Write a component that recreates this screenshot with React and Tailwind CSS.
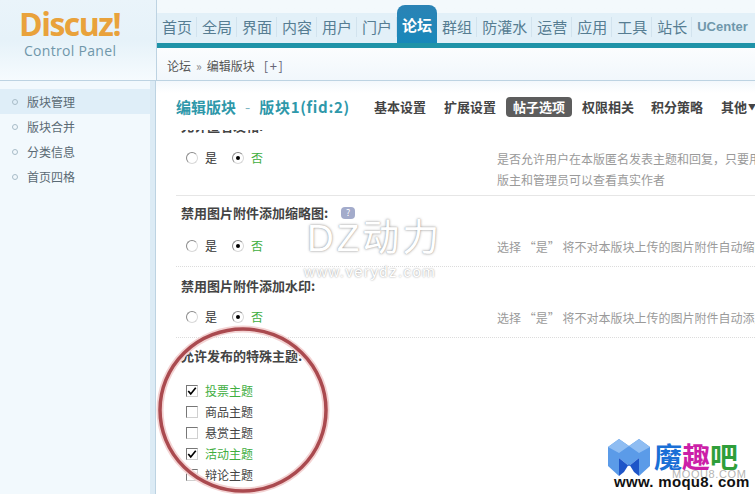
const navItems = [
  ["首页"], ["全局"], ["界面"], ["内容"], ["用户"], ["门户"], ["论坛", true], ["群组"], ["防灌水"], ["运营"], ["应用"], ["工具"], ["站长"],
];
const side = ["版块管理", "版块合并", "分类信息", "首页四格"];
const tabs = [
  ["基本设置", "ml-[28px]"], ["扩展设置", "ml-[18px]"], ["帖子选项", "ml-[10px]", true], ["权限相关", "ml-[10px]"], ["积分策略", "ml-[17px]"],
];

function Radio({ on }) {
  return (
    <span className="flex h-[12px] w-[12px] shrink-0 items-center justify-center rounded-full border border-[#8a8a8a] border-r-[#d8d8d8] border-b-[#d8d8d8] bg-white">
      {on && <span className="h-[4px] w-[4px] rounded-full bg-black" />}
    </span>
  );
}

function YesNo({ hint, hint2, h = "h-[36px]" }) {
  return (
    <div className={`flex ${h} items-start`}>
      <div className="flex w-[321px] shrink-0 items-center pl-[10px] text-[12px] leading-[18px]">
        <Radio />
        <span className="ml-[7px] w-[27px] text-[#333]">是</span>
        <Radio on />
        <span className="ml-[7px] text-[#3fae3f]">否</span>
      </div>
      <div className="whitespace-nowrap text-[12px] leading-[21px] text-[#9a9a9a]">
        <div className="-mt-[1px]">{hint}</div>
        {hint2 && <div>{hint2}</div>}
      </div>
    </div>
  );
}

function Check({ label, on }) {
  return (
    <div className="flex h-[21px] items-center pl-[10px] text-[12px]">
      <span className="flex h-[12px] w-[12px] shrink-0 items-center justify-center border border-[#777] border-r-[#d0d0d0] border-b-[#d0d0d0] bg-white">
        {on && (
          <svg viewBox="0 0 12 12" className="h-[10px] w-[10px]">
            <path d="M1.5 6 L4.5 9.5 L10.5 2" fill="none" stroke="#000" strokeWidth="2" />
          </svg>
        )}
      </span>
      <span className={`ml-[7px] ${on ? "text-[#3fae3f]" : "text-[#444]"}`}>{label}</span>
    </div>
  );
}

export default function App() {
  return (
    <div
      className="relative flex h-[494px] w-[755px] flex-col overflow-hidden bg-white"
      style={{ fontFamily: '"Noto Sans CJK SC", "Liberation Sans", sans-serif' }}
    >
      {/* header */}
      <div className="flex h-[81px] shrink-0 border-b border-[#bdd3e2]">
        <div className="flex w-[156px] shrink-0 flex-col items-start bg-gradient-to-b from-[#eaf4fa] via-[#e6f2f9] to-[#f6fbfe] pl-[19px] pt-[6px]">
          <div
            className="text-[32px] font-bold leading-[36px] tracking-[-1.5px] text-[#e9a23b]"
            style={{ fontFamily: '"Open Sans", sans-serif' }}
          >
            Discuz!
          </div>
          <div
            className="ml-[5px] text-[14px] leading-[18px] tracking-[0.3px] text-[#7097aa]"
            style={{ fontFamily: '"Open Sans", sans-serif' }}
          >
            Control Panel
          </div>
        </div>
        <div className="flex min-w-0 flex-1 flex-col border-l border-[#bdd3e2]">
          <div className="flex h-[43px] shrink-0 items-end bg-gradient-to-b from-[#f3f9fc] from-30% to-[#e2f0f8] to-30%">
            {navItems.map(([t, on]) =>
              on ? (
                <div
                  key={t}
                  className="flex h-[38px] items-center rounded-t-[8px] bg-gradient-to-b from-[#2a83b5] to-[#1888ba] px-[5px] pt-[3px] text-[15px] font-bold text-white"
                >
                  {t}
                </div>
              ) : (
                <div key={t} className="relative flex h-[38px] items-center px-[5px] pt-[5px] text-[15px] leading-[20px] text-[#567d92]">
                  {t}
                  <span className="absolute right-0 top-[12px] h-[20px] w-px bg-[#d2e3ee]" />
                </div>
              )
            )}
            <div
              className="ml-[5px] flex h-[38px] items-center whitespace-nowrap pt-[5px] text-[13px] font-bold text-[#6f97ab]"
              style={{ fontFamily: '"Liberation Sans", sans-serif' }}
            >
              UCenter
            </div>
          </div>
          <div className="h-[5px] shrink-0 bg-[#1f93a8]" />
          <div className="flex flex-1 items-center bg-gradient-to-b from-[#fbfdfe] to-[#f1f7fc] pl-[10px] pt-[4px] text-[12px] text-[#555]">
            论坛 <span className="mx-[5px] text-[#888]">»</span> 编辑版块
            <span className="ml-[9px] text-[13px] tracking-[1.5px] text-[#667]">[+]</span>
          </div>
        </div>
      </div>

      {/* body */}
      <div className="flex min-h-0 flex-1">
        <div className="flex w-[156px] shrink-0 border-r border-[#bdd3e2]">
          <div className="w-[150px] bg-[#f2f9fd] pt-[8px]">
            {side.map((s, i) => (
              <div
                key={s}
                className={`flex h-[25px] items-center pl-[12px] text-[12px] text-[#5a6a74] ${i === 0 ? "bg-[#dfeef8]" : ""}`}
              >
                <span className="h-[6px] w-[6px] rounded-full border border-[#a8bcc8]" />
                <span className="ml-[9px]">{s}</span>
              </div>
            ))}
          </div>
          <div className="flex-1 bg-[#dcebf5]" />
        </div>

        <div className="min-w-0 flex-1 overflow-hidden bg-gradient-to-b from-[#f3f8fc] to-white to-[12px]">
          <div className="flex h-[47px] items-center whitespace-nowrap pl-[20px] pt-[5px]">
            <div className="flex w-[170px] shrink-0 items-center text-[15px] font-bold text-[#2e98aa]">
              编辑版块<span className="mx-[9px] font-normal text-[#7fb5c2]">-</span>
              <span className="tracking-[0.7px]">版块1(fid:2)</span>
            </div>
            {tabs.map(([t, ml, on]) => (
              <div
                key={t}
                className={`${ml} text-[13px] font-bold ${on ? "rounded-[4px] bg-[#5d5d5d] px-[7px] py-[1px] leading-[18px] text-white" : "text-[#444]"}`}
              >
                {t}
              </div>
            ))}
            <div className="ml-[18px] flex items-center text-[13px] font-bold text-[#444]">
              其他<span className="ml-[1px] text-[8px]">▼</span>
            </div>
          </div>

          <div className="pl-[20px]">
            <div className="h-[2px]" />
            <div className="h-[3px] overflow-hidden pl-[5px]">
              <div className="-mt-[13px] text-[13px] font-bold leading-[18px] text-[#444]">允许匿名发帖:</div>
            </div>
            <div className="h-[16px]" />
            <div className="border-b border-[#e6e6e6]">
              <YesNo
                hint="是否允许用户在本版匿名发表主题和回复，只要用户组权限允许，用户就可以匿名"
                hint2="版主和管理员可以查看真实作者"
                h="h-[46px]"
              />
            </div>

            <div className="flex h-[39px] items-center pb-[5px] pl-[5px] text-[13px] font-bold text-[#444]">
              禁用图片附件添加缩略图:
              <span className="ml-[13px] flex h-[12px] w-[14px] items-center justify-center rounded-[4px] bg-[#a3abcb] text-[9px] font-normal text-white">
                ?
              </span>
            </div>
            <div className="border-b border-dotted border-[#dcdcdc] pt-[2px]">
              <YesNo hint="选择 “是” 将不对本版块上传的图片附件自动缩略图片附件自动缩略" h="h-[29px]" />
            </div>

            <div className="flex h-[37px] items-center pl-[5px] text-[13px] font-bold text-[#444]">禁用图片附件添加水印:</div>
            <div className="border-b border-dotted border-[#dcdcdc] pt-[4px]">
              <YesNo hint="选择 “是” 将不对本版块上传的图片附件自动添加水印图片附件" h="h-[29px]" />
            </div>

            <div className="flex h-[38px] items-center pb-[2px] pl-[5px] text-[13px] font-bold text-[#444]">允许发布的特殊主题:</div>
            <div className="pt-[4px]">
              <Check label="投票主题" on />
              <Check label="商品主题" />
              <Check label="悬赏主题" />
              <Check label="活动主题" on />
              <Check label="辩论主题" />
            </div>
          </div>
        </div>
      </div>

      {/* watermark */}
      <div
        className="pointer-events-none absolute left-[307px] top-[217px] text-[37px] leading-[44px] tracking-[3px] text-white"
        style={{ fontFamily: '"Liberation Sans", "Noto Sans CJK SC", sans-serif', textShadow: "0 0 3px #9a9a9a, 0 0 1px #b0b0b0" }}
      >
        DZ动力
      </div>
      <div
        className="pointer-events-none absolute left-[304px] top-[263px] text-[15px] leading-[18px] tracking-[1.4px] text-white"
        style={{ fontFamily: '"Liberation Sans", sans-serif', textShadow: "0 0 2px #8a8a8a" }}
      >
        www.verydz.com
      </div>

      {/* red circle annotation */}
      <svg className="pointer-events-none absolute left-[150px] top-[320px]" width="190" height="174" viewBox="0 0 190 174">
        <ellipse cx="93" cy="90" rx="83" ry="81" fill="none" stroke="#f3d3d3" strokeWidth="7" />
        <ellipse cx="93" cy="90" rx="83" ry="81" fill="none" stroke="#aa4a4f" strokeWidth="3.5" />
      </svg>

      {/* moqu8 logo */}
      <div className="pointer-events-none absolute left-[606px] top-[436px] h-[54px] w-[145px]">
        <svg className="absolute left-0 top-[2px]" width="46" height="40" viewBox="0 0 46 40">
          <path d="M2 9 L13 1 L23 8 L33 1 L44 9 L44 28 L33 38 L33 20 L23 28 L13 20 L13 38 L2 28 Z" fill="#5b9be8" />
          <path d="M13 20 L23 28 L33 20 L33 38 L28 34 L23 26 L18 34 L13 38 Z" fill="#1e55c8" />
          <path d="M2 9 L13 1 L23 8 L13 15 Z M23 8 L33 1 L44 9 L33 15 Z" fill="#8fbdf2" />
        </svg>
        <div
          className="absolute left-[66px] top-[32px] whitespace-nowrap text-[11px] leading-[12px] tracking-[0.6px] text-[#b5b5b5]"
          style={{ fontFamily: '"Liberation Sans", sans-serif' }}
        >
          MOQU8.COM
        </div>
        <div className="absolute left-[48px] top-[4px] flex text-[28px] font-bold leading-[32px]">
          <span className="text-[#1a6fd6]">魔</span>
          <span className="text-[#cc1fa8]">趣</span>
          <span className="text-[#2f9e3a]">吧</span>
        </div>
        <div
          className="absolute left-[8px] top-[37px] whitespace-nowrap text-[15px] font-bold leading-[18px] tracking-[0.3px] text-[#111]"
          style={{ fontFamily: '"Liberation Sans", sans-serif' }}
        >
          www. moqu8. com
        </div>
      </div>
    </div>
  );
}
